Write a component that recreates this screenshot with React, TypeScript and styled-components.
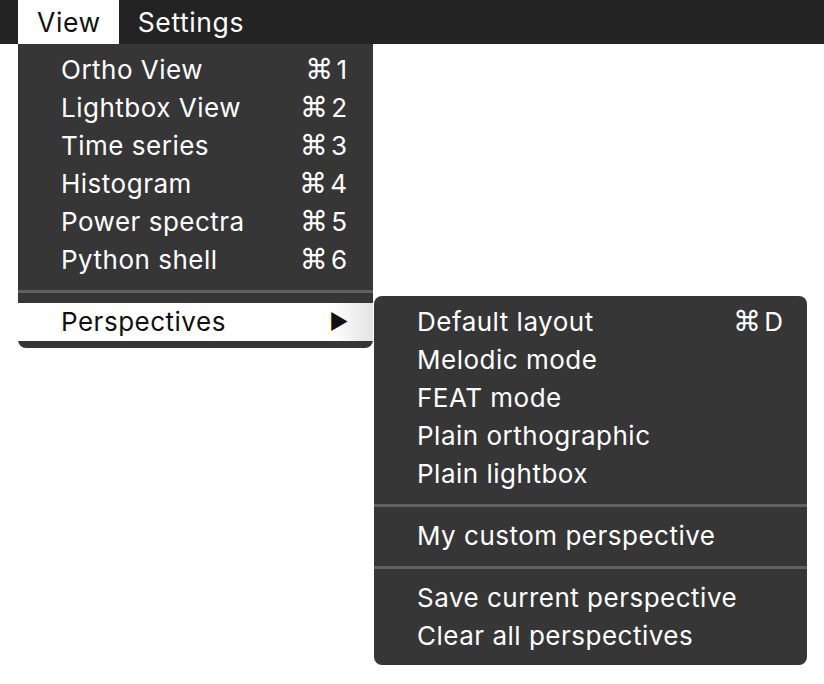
import React from "react";
import styled, { createGlobalStyle } from "styled-components";

const Global = createGlobalStyle`
  html, body { margin: 0; padding: 0; background: #ffffff; }
  body { font-family: Inter, "Noto Sans", "DejaVu Sans", sans-serif; -webkit-font-smoothing: antialiased; }
`;

const Page = styled.div`
  width: 824px;
  height: 684px;
  position: relative;
  overflow: hidden;
  background: #ffffff;
`;

const MenuBar = styled.div`
  display: flex;
  height: 44px;
  background: #232323;
  padding-left: 18px;
`;

const BarItem = styled.div<{ $active?: boolean }>`
  height: 44px;
  display: flex;
  align-items: center;
  padding: 0 18px 0 19px;
  font-size: 26.5px;
  letter-spacing: 0.6px;
  color: ${(p) => (p.$active ? "#111" : "#fff")};
  background: ${(p) => (p.$active ? "#ffffff" : "transparent")};
`;

const Menu = styled.div<{ $top: number; $left: number; $width: number; $pb: number; $round: string }>`
  position: absolute;
  top: ${(p) => p.$top}px;
  left: ${(p) => p.$left}px;
  width: ${(p) => p.$width}px;
  background: #363636;
  padding: 7px 0 ${(p) => p.$pb}px;
  border-radius: ${(p) => p.$round};
  box-sizing: border-box;
  z-index: 1;
`;

const Row = styled.div<{ $hl?: boolean; $pr: number }>`
  position: relative;
  height: 38px;
  box-sizing: border-box;
  display: flex;
  align-items: center;
  justify-content: space-between;
  padding: 0 ${(p) => p.$pr}px 2px 43px;
  font-size: 26px;
  letter-spacing: 0.5px;
  color: ${(p) => (p.$hl ? "#111" : "#fff")};
  background: ${(p) =>
    p.$hl ? "linear-gradient(to right, #ffffff 0%, #ffffff 88%, #e4e4e4 100%)" : "transparent"};
`;

const Shortcut = styled.span`
  display: flex;
  align-items: center;
  gap: 3px;
  letter-spacing: 0;
`;

const Cmd = styled.span`
  font-family: "DejaVu Sans", sans-serif;
  font-size: 28px;
`;

const Arrow = styled.span`
  font-size: 21px;
  color: #111;
`;

const Separator = styled.div`
  height: 3px;
  background: #616161;
  margin: 11px 0 10px;
`;

const Sub = styled(Menu)`
  z-index: 2;
`;

const mainItems: [string, string][] = [
  ["Ortho View", "1"],
  ["Lightbox View", "2"],
  ["Time series", "3"],
  ["Histogram", "4"],
  ["Power spectra", "5"],
  ["Python shell", "6"],
];

const layouts = ["Melodic mode", "FEAT mode", "Plain orthographic", "Plain lightbox"];

export default function App() {
  return (
    <Page>
      <Global />
      <MenuBar>
        <BarItem $active>View</BarItem>
        <BarItem>Settings</BarItem>
      </MenuBar>
      <Menu $top={44} $left={18} $width={355} $pb={7} $round="0 0 8px 8px">
        {mainItems.map(([label, key]) => (
          <Row key={label} $pr={26}>
            <span>{label}</span>
            <Shortcut>
              <Cmd>⌘</Cmd>
              <span>{key}</span>
            </Shortcut>
          </Row>
        ))}
        <Separator />
        <Row $hl $pr={24}>
          <span>Perspectives</span>
          <Arrow>▶</Arrow>
        </Row>
      </Menu>
      <Sub $top={296} $left={374} $width={433} $pb={10} $round="8px">
        <Row $pr={24}>
          <span>Default layout</span>
          <Shortcut>
            <Cmd>⌘</Cmd>
            <span>D</span>
          </Shortcut>
        </Row>
        {layouts.map((l) => (
          <Row key={l} $pr={24}>
            <span>{l}</span>
          </Row>
        ))}
        <Separator />
        <Row $pr={24}>
          <span>My custom perspective</span>
        </Row>
        <Separator />
        <Row $pr={24}>
          <span>Save current perspective</span>
        </Row>
        <Row $pr={24}>
          <span>Clear all perspectives</span>
        </Row>
      </Sub>
    </Page>
  );
}
